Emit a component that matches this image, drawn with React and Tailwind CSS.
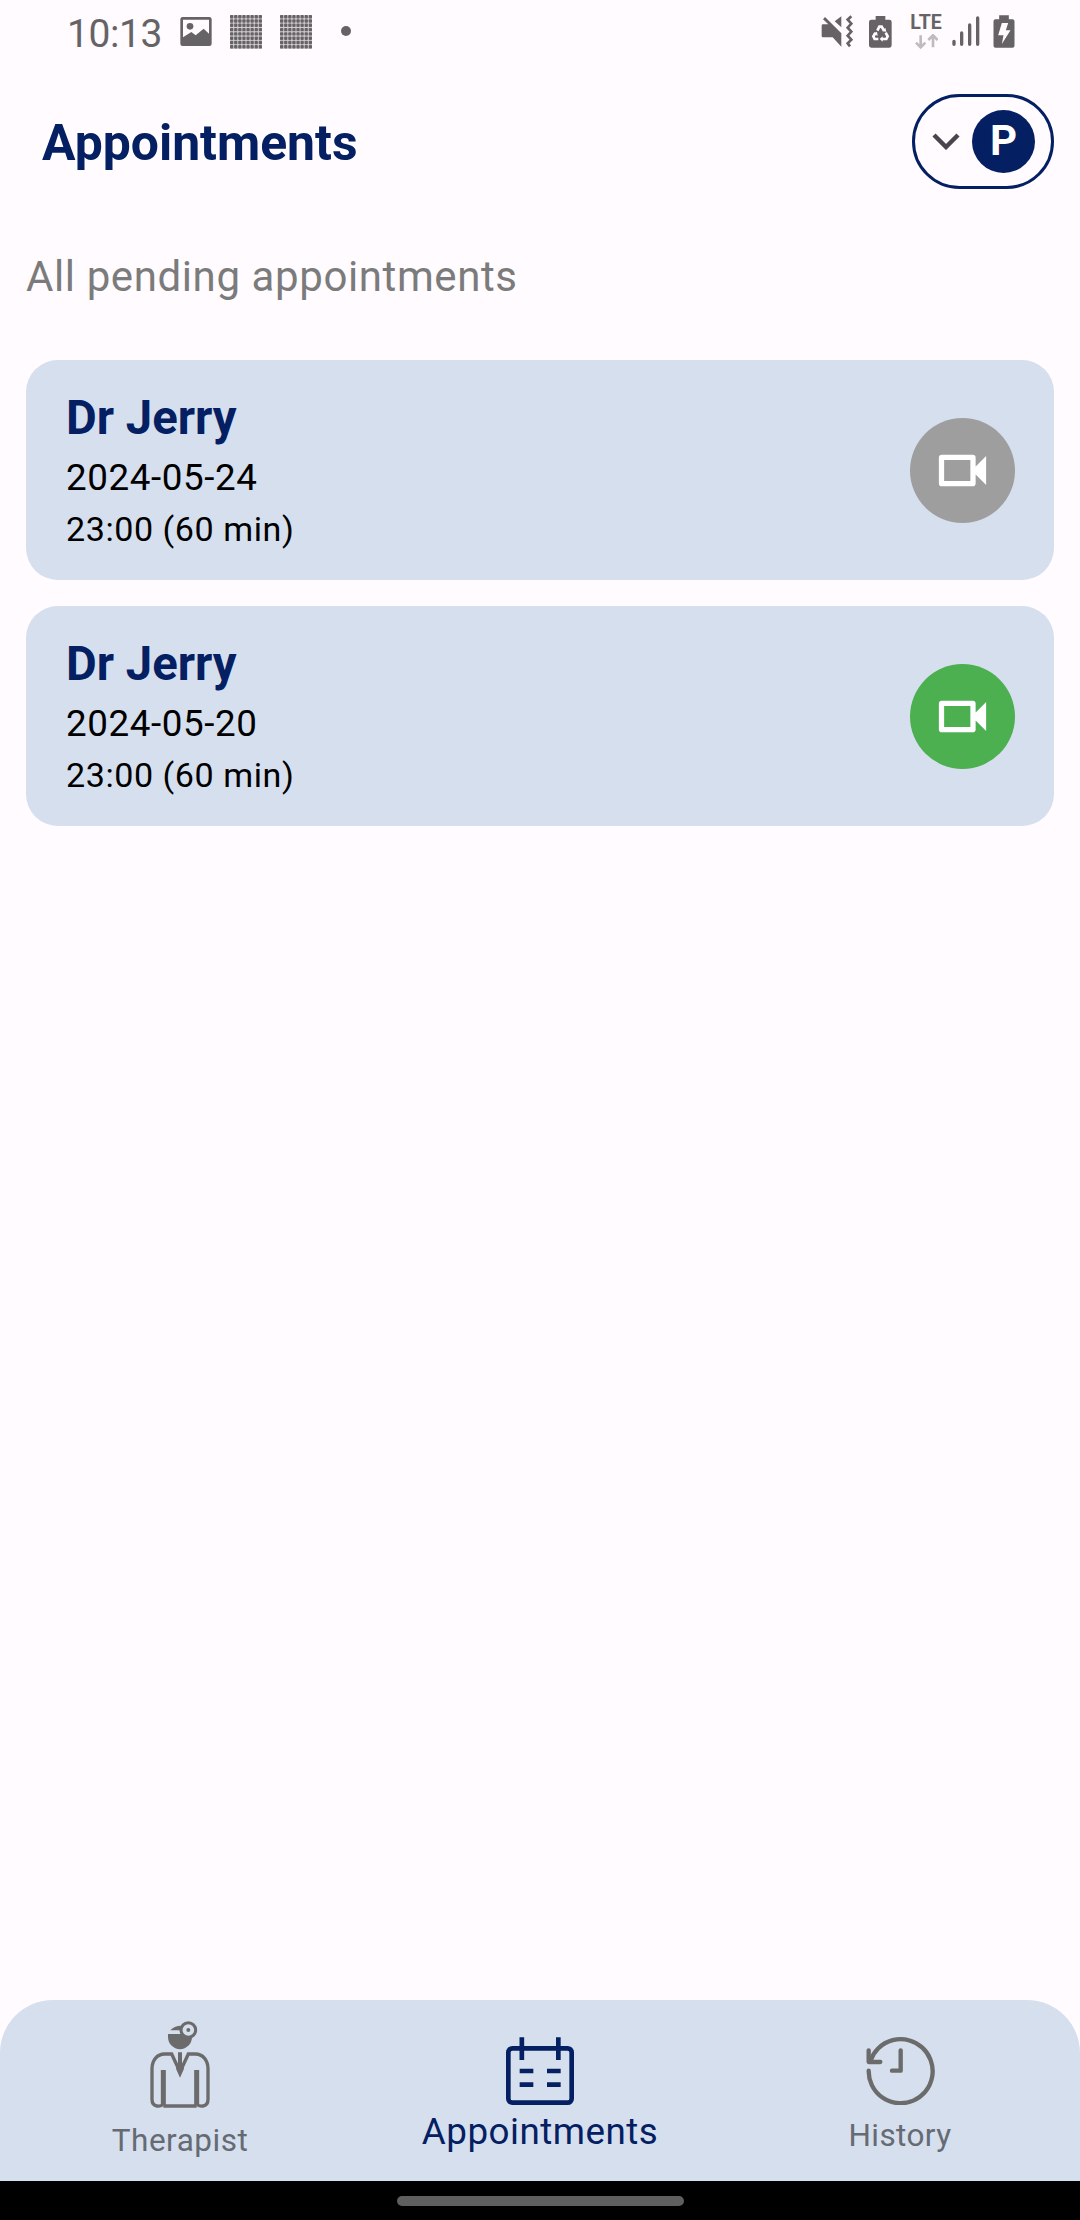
import React from "react";

const appointments = [
  { name: "Dr Jerry", date: "2024-05-24", time: "23:00 (60 min)", color: "bg-[#9e9e9e]" },
  { name: "Dr Jerry", date: "2024-05-20", time: "23:00 (60 min)", color: "bg-[#4caf50]" },
];

const gridRows = [0, 4.3, 8.6, 12.9, 17.2, 21.5, 25.8, 30.1];
const gridCols = [0, 4.1, 8.2, 12.3, 16.4, 20.5, 24.6, 28.7];

function DotGrid() {
  return (
    <svg width="32" height="34" viewBox="0 0 32 34" fill="#666367">
      <rect width="32" height="34" fill="#666367" opacity="0.3" />
      {gridRows.map((y) =>
        gridCols.map((x) => <rect key={x + "-" + y} x={x} y={y} width="3.3" height="3.4" rx="0.9" />)
      )}
    </svg>
  );
}

function StatusBar() {
  return (
    <div className="flex h-[64px] items-start justify-between pl-[67px] pr-[65px] text-[#666367]">
      <div className="flex items-start">
        <span className="mt-[11px] w-[113px] text-[39px] leading-[46px] tracking-[-0.4px]">10:13</span>
        <svg className="mt-[17px]" width="32" height="29" viewBox="390 51 96 87">
          <path fillRule="evenodd" fill="#666367" d="M398 51H478Q485 51 485 58V131Q485 138 478 138H398Q391 138 391 131V58Q391 51 398 51ZM399 59V112L424 96L437 106L461 86L477 101V59Z" />
          <circle cx="420" cy="79" r="10" fill="#666367" />
        </svg>
        <div className="ml-[18px] mt-[15px]"><DotGrid /></div>
        <div className="ml-[18px] mt-[15px]"><DotGrid /></div>
        <div className="ml-[29px] mt-[26px] h-[10px] w-[10px] rounded-full bg-[#666367]" />
      </div>
      <div className="flex items-start">
        <svg className="mt-[15px]" width="32" height="33" viewBox="62 45 96 99" fill="#666367">
          <path d="M64 77Q64 73 68 73H84L68 58L74 51L123 100V140L97 112H68Q64 112 64 108Z" />
          <path d="M123 49V82L103 64Z" />
          <path d="M153 49L142 59L153 71L142 83L153 95L142 107L153 119L142 130L149 139" fill="none" stroke="#666367" strokeWidth="8" />
        </svg>
        <svg className="ml-[16px] mt-[15px]" width="23" height="33" viewBox="207 45 69 99">
          <path fill="#666367" d="M227 48H256V59H268Q275 59 275 66V136Q275 143 268 143H214Q207 143 207 136V66Q207 59 214 59H227Z" />
          <g fill="none" stroke="#fffbff" strokeWidth="8">
            <path d="M232 92L238 80H245L252 92" />
            <path d="M257 98L263 109L259 117H245" />
            <path d="M235 117H224L220 109L227 98" />
          </g>
          <path fill="#fffbff" d="M247 94L259 95L256 83ZM248 109V125L239 117ZM219 101L231 95L233 107Z" />
        </svg>
        <div className="ml-[17px] mt-[13px] flex w-[34px] flex-col items-center">
          <span className="text-[19.5px] font-bold leading-[20px]">LTE</span>
          <svg className="mt-[1px]" width="23" height="15" viewBox="342 101 69 45" fill="none" stroke="#bfbcc0" strokeWidth="8">
            <path d="M359 105V140M345 127L359 141L373 127" />
            <path d="M396 141V107M382 119L396 105L410 119" />
          </svg>
        </div>
        <svg className="ml-[9px] mt-[15px]" width="28" height="32" viewBox="455 45 84 96" stroke="#666367" strokeWidth="10" strokeLinecap="round">
          <path d="M461 124V133M484 99V133M508 75V133M532 54V133" />
        </svg>
        <svg className="ml-[13px] mt-[15px]" width="22" height="33" viewBox="578 45 65 99">
          <path fill="#666367" d="M596 46H625V58H636Q642 58 642 64V137Q642 143 636 143H585Q579 143 579 137V64Q579 58 585 58H596Z" />
          <path fill="#fffbff" d="M604 69H623L616 91H630L604 132L609 106H593Z" />
        </svg>
      </div>
    </div>
  );
}

function VideoIcon() {
  return (
    <svg width="63" height="63" viewBox="0 0 24 24" fill="white">
      <path d="M15 8v8H5V8h10m1-2H4c-.55 0-1 .45-1 1v10c0 .55.45 1 1 1h12c.55 0 1-.45 1-1v-3.5l4 4v-11l-4 4V7c0-.55-.45-1-1-1z" />
    </svg>
  );
}

function AppointmentCard({ item }) {
  return (
    <div className="flex h-[220px] items-center justify-between rounded-[32px] bg-[#d6dfed] pl-[40px] pr-[39px]">
      <div className="flex flex-col pt-[3px]">
        <div className="h-[62px] text-[47.25px] font-bold leading-[56px] text-[#042062]">{item.name}</div>
        <div className="text-[36.75px] leading-[52px] tracking-[0.6px] text-black">{item.date}</div>
        <div className="text-[34.1px] leading-[50px] tracking-[0.55px] text-black">{item.time}</div>
      </div>
      <div className={"flex h-[105px] w-[105px] items-center justify-center rounded-full " + item.color}>
        <VideoIcon />
      </div>
    </div>
  );
}

function TherapistIcon() {
  return (
    <svg width="60" height="88" viewBox="150 90 180 264" fill="none" stroke="#6b6b6b">
      <path fill="#6b6b6b" stroke="none" d="M204 132H242L276 140A36 38 0 0 1 204 140Z" />
      <path fill="#6b6b6b" stroke="none" d="M211 121Q221 107 245 107V121Z" />
      <circle cx="265" cy="120" r="22" fill="#d6dfed" strokeWidth="9" />
      <circle cx="265" cy="120" r="6" fill="#6b6b6b" stroke="none" />
      <path strokeWidth="10" d="M190 348H290" />
      <path strokeWidth="10" d="M190 342C184 349 176 349 171 348C162 347 156 340 156 328V236C156 210 172 192 194 192H215L240 246L265 192H286C308 192 324 210 324 236V328C324 340 318 347 309 348C304 349 296 349 290 342" />
      <path strokeWidth="15" d="M190 240V345M290 240V345" />
      <path fill="#6b6b6b" stroke="none" d="M234 187H246V222L252 236L240 263L228 236L234 222Z" />
    </svg>
  );
}

function CalendarIcon() {
  return (
    <svg width="68" height="69" viewBox="288 80 204 207" fill="none" stroke="#042062" strokeWidth="14">
      <rect x="295" y="114" width="190" height="163" rx="12" />
      <path d="M335.5 81V149M445 81V149M329 182H370M411 182H452M329 223H370M411 223H452" />
    </svg>
  );
}

function HistoryIcon() {
  return (
    <svg width="69" height="69" viewBox="106 138 207 207" fill="none" stroke="#6b6b6b" strokeWidth="13" strokeLinecap="round" strokeLinejoin="round">
      <path d="M114 242A96 96 0 1 0 119 213" />
      <path d="M114 181V216H149M210 181V242H184" />
    </svg>
  );
}

export default function App() {
  return (
    <div className="flex h-[2220px] w-[1080px] flex-col overflow-hidden bg-[#fffbff] font-['Roboto',sans-serif]">
      <StatusBar />
      <header className="mt-[30px] flex h-[95px] items-start justify-between pl-[42px] pr-[26px]">
        <h1 className="mt-[19px] text-[49.875px] font-bold leading-[60px] text-[#042062]">Appointments</h1>
        <button className="flex h-[95px] w-[142px] items-center justify-between rounded-full border-[3px] border-[#042062] pl-[17px] pr-[16px]">
          <svg width="28" height="17" viewBox="0 0 28 17" fill="none" stroke="#49454f" strokeWidth="4.4">
            <path d="M2 2L14 14L26 2" />
          </svg>
          <span className="flex h-[63px] w-[63px] items-center justify-center rounded-full bg-[#042062] text-[42px] font-bold leading-[63px] text-white">
            <span className="-mt-[3px]">P</span>
          </span>
        </button>
      </header>
      <main className="flex flex-1 flex-col px-[26px]">
        <h2 className="mt-[58px] h-[113px] text-[42px] leading-[60px] tracking-[0.6px] text-[#7b7b7b]">All pending appointments</h2>
        <div className="flex flex-col gap-[26px]">
          {appointments.map((item) => (
            <AppointmentCard key={item.date} item={item} />
          ))}
        </div>
      </main>
      <nav className="grid h-[181px] grid-cols-3 rounded-t-[53px] bg-[#d6dfed]">
        <div className="flex flex-col items-center pt-[20px]">
          <TherapistIcon />
          <span className="mt-[13px] text-[31.5px] leading-[40px] tracking-[0.5px] text-[#656a73]">Therapist</span>
        </div>
        <div className="flex flex-col items-center pt-[37px]">
          <CalendarIcon />
          <span className="mt-[4px] text-[36.75px] leading-[44px] tracking-[0.5px] text-[#042062]">Appointments</span>
        </div>
        <div className="flex flex-col items-center pt-[36px]">
          <HistoryIcon />
          <span className="mt-[11px] text-[31.5px] leading-[40px] tracking-[0.4px] text-[#656a73]">History</span>
        </div>
      </nav>
      <div className="flex h-[39px] items-center justify-center bg-black">
        <div className="h-[10px] w-[287px] rounded-full bg-[#5f5f5f]" />
      </div>
    </div>
  );
}
